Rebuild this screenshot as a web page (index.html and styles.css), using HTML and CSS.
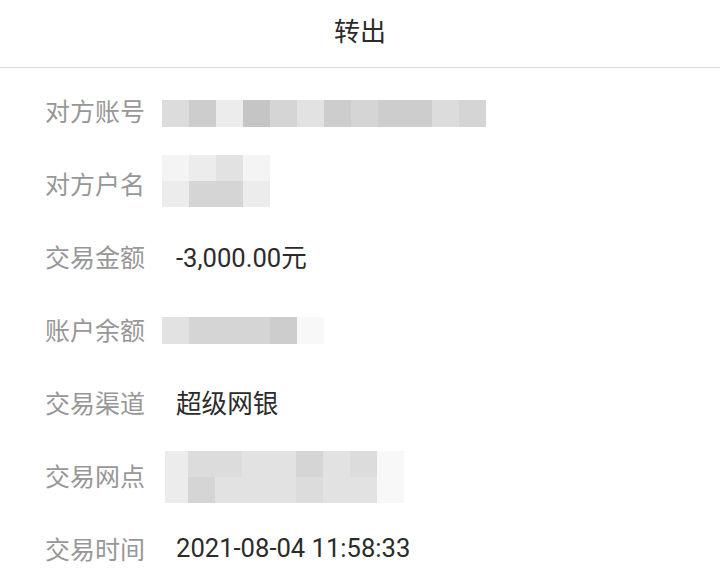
FILE: index.html
```html
<!DOCTYPE html>
<html lang="zh-CN">
<head>
    <meta charset="UTF-8">
    <meta name="viewport" content="width=device-width, initial-scale=1.0">
    <title>转出</title>
    <link rel="stylesheet" href="styles.css">
</head>
<body>
    <div class="page">
        <!-- Header -->
        <div class="header">
            <h1>转出</h1>
        </div>

        <!-- Details -->
        <div class="details">
            <div class="row">
                <span class="label">对方账号</span>
                <div class="mosaic cols-12 down">
                    <i class="s3"></i><i class="s5"></i><i class="s1"></i><i class="s6"></i><i class="s4"></i><i class="s2"></i>
                    <i class="s5"></i><i class="s4"></i><i class="s5"></i><i class="s5"></i><i class="s3"></i><i class="s4"></i>
                </div>
            </div>
            <div class="row">
                <span class="label">对方户名</span>
                <div class="mosaic cols-4 up">
                    <i class="s0"></i><i class="s1"></i><i class="s2"></i><i class="s0"></i>
                    <i class="s1"></i><i class="s4"></i><i class="s4"></i><i class="s1"></i>
                </div>
            </div>
            <div class="row">
                <span class="label">交易金额</span>
                <span class="value">-3,000.00元</span>
            </div>
            <div class="row">
                <span class="label">账户余额</span>
                <div class="mosaic cols-6 down-sm">
                    <i class="s2"></i><i class="s4"></i><i class="s4"></i><i class="s4"></i><i class="s5"></i><i class="s7"></i>
                </div>
            </div>
            <div class="row">
                <span class="label">交易渠道</span>
                <span class="value">超级网银</span>
            </div>
            <div class="row">
                <span class="label">交易网点</span>
                <div class="mosaic cols-9 shift">
                    <i class="s1"></i><i class="s3"></i><i class="s3"></i><i class="s2"></i><i class="s2"></i><i class="s4"></i><i class="s2"></i><i class="s3"></i><i class="s7"></i>
                    <i class="s1"></i><i class="s4"></i><i class="s2"></i><i class="s2"></i><i class="s2"></i><i class="s3"></i><i class="s2"></i><i class="s2"></i><i class="s7"></i>
                </div>
            </div>
            <div class="row">
                <span class="label">交易时间</span>
                <span class="value">2021-08-04 11:58:33</span>
            </div>
        </div>
    </div>
</body>
</html>
```

FILE: styles.css
```css
body {
    margin: 0;
    background: #fff;
    font-family: Roboto, "Noto Sans CJK SC", sans-serif;
    color: #2b2b2b;
}
.page {
    width: 720px;
}
.header {
    height: 68px;
    box-sizing: border-box;
    padding-bottom: 8px;
    display: flex;
    align-items: center;
    justify-content: center;
    border-bottom: 1px solid #dedede;
}
h1 {
    margin: 0;
    font-size: 26px;
    font-weight: normal;
    color: #2b2b2b;
}
.details {
    padding-top: 5px;
}
.row {
    height: 73px;
    display: flex;
    align-items: center;
    padding-left: 45px;
}
.label {
    width: 117px;
    font-size: 25px;
    color: #979797;
    flex-shrink: 0;
}
.value {
    padding-left: 14px;
    font-size: 25.6px;
    color: #2b2b2b;
}

/* pixelated blocks */
.mosaic {
    display: grid;
    grid-auto-rows: 27px;
}
.mosaic i {
    display: block;
}
.cols-12 { grid-template-columns: repeat(12, 27px); }
.cols-4 { grid-template-columns: repeat(4, 27px); grid-auto-rows: 26px; }
.cols-6 { grid-template-columns: repeat(6, 27px); }
.cols-9 { grid-template-columns: 23px repeat(8, 27px); grid-auto-rows: 26px; }
.down { margin-top: 7px; }
.down-sm { margin-top: 4px; }
.up { margin-top: -3px; }
.shift { margin-left: 3px; margin-top: 5px; }

.s0 { background: #f4f4f4; }
.s1 { background: #ececec; }
.s2 { background: #e2e2e2; }
.s3 { background: #dcdcdc; }
.s4 { background: #d5d5d5; }
.s5 { background: #cdcdcd; }
.s6 { background: #c5c5c5; }
.s7 { background: #f8f8f8; }
```
